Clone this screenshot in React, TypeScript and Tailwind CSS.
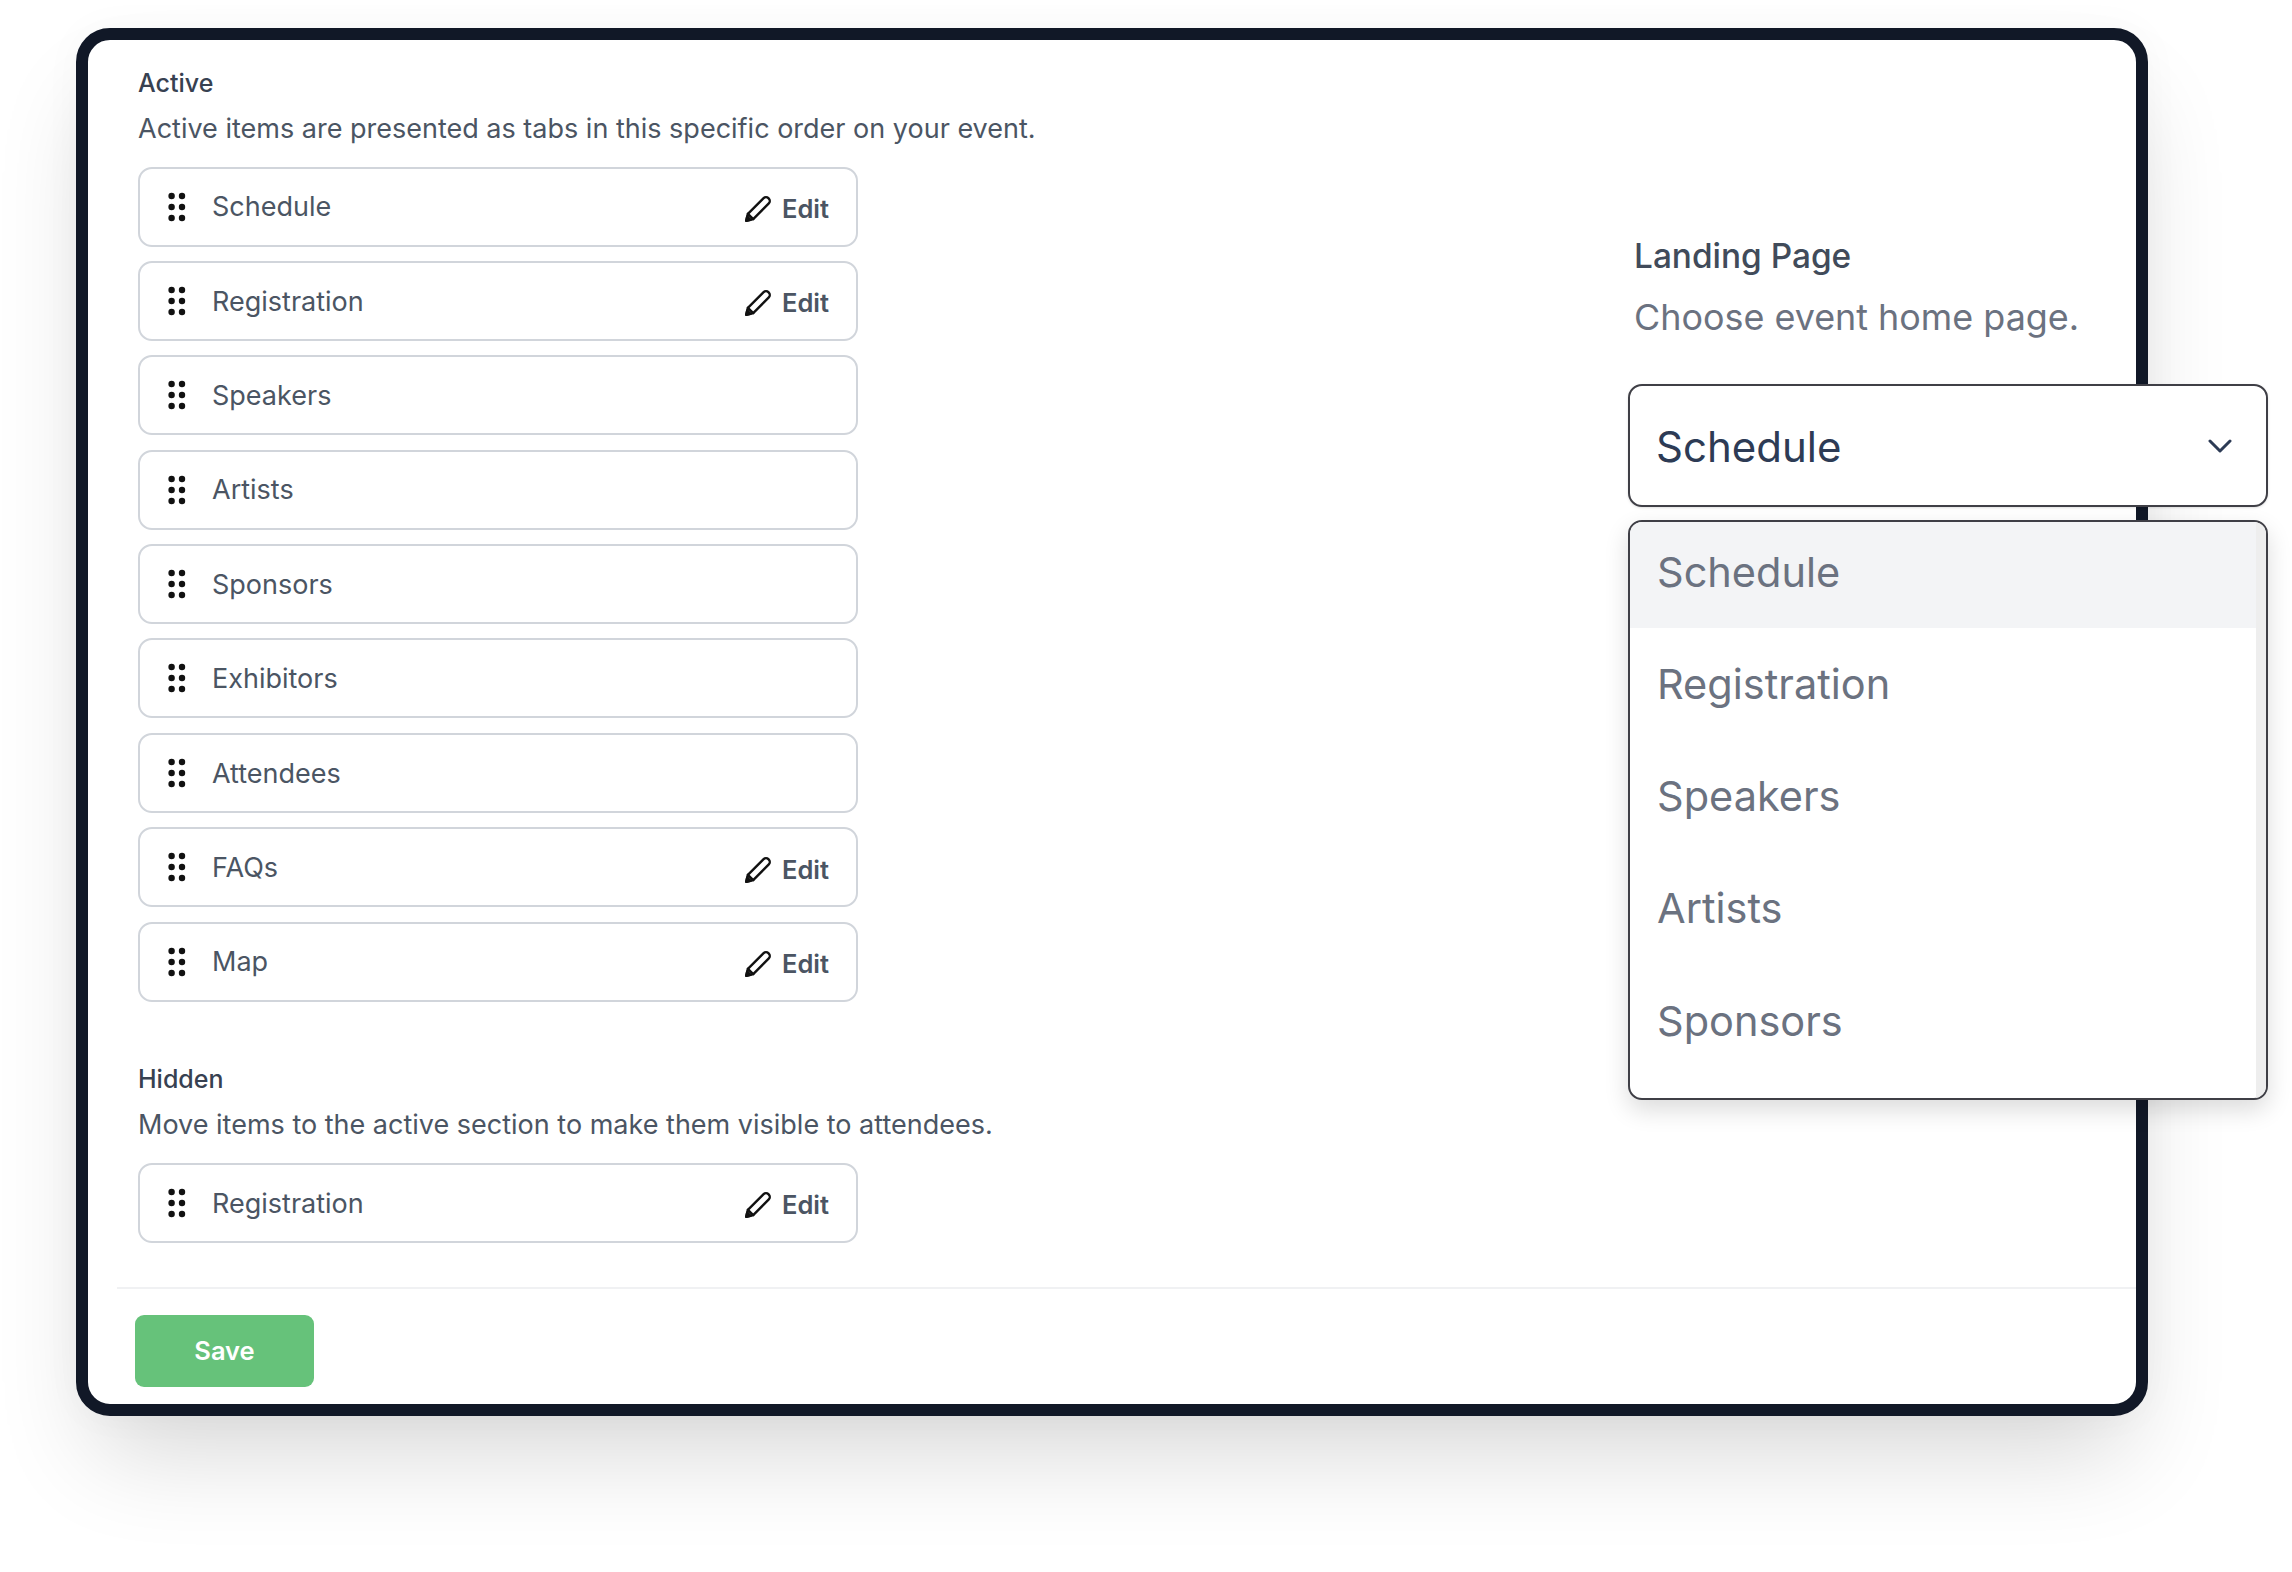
const font = { fontFamily: 'Inter, sans-serif' };

const active = [
  { name: 'Schedule', edit: true },
  { name: 'Registration', edit: true },
  { name: 'Speakers', edit: false },
  { name: 'Artists', edit: false },
  { name: 'Sponsors', edit: false },
  { name: 'Exhibitors', edit: false },
  { name: 'Attendees', edit: false },
  { name: 'FAQs', edit: true },
  { name: 'Map', edit: true },
];

const options = ['Schedule', 'Registration', 'Speakers', 'Artists', 'Sponsors'];

function Grip() {
  return (
    <svg width="18" height="30" viewBox="0 0 18 30" className="shrink-0">
      {[3, 14, 25].map((y) => (
        <g key={y} fill="#111">
          <circle cx="3.6" cy={y + 1} r="3.2" />
          <circle cx="14" cy={y + 1} r="3.2" />
        </g>
      ))}
    </svg>
  );
}

function Pencil() {
  return (
    <svg width="28" height="28" viewBox="0 0 28 28" fill="none" stroke="#111" strokeWidth="2.4" strokeLinejoin="round" strokeLinecap="round">
      <path d="M2.2 25.8l1.7-7L19.6 3.2c1.3-1.3 3.5-1.3 4.8 0l.4.4c1.3 1.3 1.3 3.5 0 4.8L9.2 24.1z" />
      <path d="M3.9 18.8l5.3 5.3" />
      <path d="M2.2 25.8l1-4.4 3.4 3.4z" fill="#111" />
    </svg>
  );
}

function Row({ name, edit }: { name: string; edit: boolean }) {
  return (
    <div className="flex h-[80px] w-[720px] items-center rounded-[14px] border-2 border-[#d1d5db] bg-white pl-[28px] pr-[27px]">
      <Grip />
      <span className="ml-[26px] pt-[2px] text-[27px] text-[#4b5563]">{name}</span>
      {edit && (
        <span className="ml-auto flex items-center gap-[10px] pt-[5px]">
          <Pencil />
          <span className="text-[25.5px] font-semibold text-[#4b5563]">Edit</span>
        </span>
      )}
    </div>
  );
}

export default function App() {
  return (
    <div style={font} className="relative h-[1572px] w-[2292px] overflow-hidden bg-white pl-[76px] pt-[28px]">
      <div className="relative flex h-[1388px] w-[2072px] flex-col rounded-[34px] border-[12px] border-[#111827] bg-white shadow-[0_55px_100px_-20px_rgba(0,0,0,0.16),0_0_40px_rgba(0,0,0,0.03)]">
        <div className="flex flex-col pl-[50px] pt-[28px]">
          <div className="text-[25px] font-medium leading-[30px] text-[#374151]">Active</div>
          <div className="mt-[16px] text-[27px] leading-[30px] text-[#4b5563]">
            Active items are presented as tabs in this specific order on your event.
          </div>
          <div className="mt-[22.5px] flex flex-col gap-[14.4px]">
            {active.map((r) => (
              <Row key={r.name} {...r} />
            ))}
          </div>
          <div className="mt-[62.8px] text-[25px] font-medium leading-[30px] text-[#374151]">Hidden</div>
          <div className="mt-[16px] text-[27px] leading-[30px] text-[#4b5563]">
            Move items to the active section to make them visible to attendees.
          </div>
          <div className="mt-[22.5px]">
            <Row name="Registration" edit />
          </div>
        </div>
        <div className="ml-[29px] mt-[44px] h-[2px] bg-[#f0f1f3]" />
        <div className="pl-[47px] pt-[26px]">
          <button className="flex h-[72px] w-[179px] items-center justify-center rounded-[9px] bg-[#66c27a] text-[25.5px] font-semibold text-white">
            Save
          </button>
        </div>

        <div className="absolute left-[1540px] top-[197.5px] w-[640px]">
          <div className="pl-[6px] text-[33.4px] font-medium leading-[36px] text-[#414b5a]">Landing Page</div>
          <div className="mt-[24px] pl-[6px] text-[35.9px] leading-[38px] text-[#6b7280]">Choose event home page.</div>
          <div className="mt-[48.5px] flex h-[123px] items-center justify-between rounded-[14px] border-2 border-[#3f3f46] bg-white pl-[26px] pr-[34px] shadow-sm">
            <span className="pt-[2px] text-[42px] text-[#2d3b55]">Schedule</span>
            <svg width="24" height="24" viewBox="0 0 24 24" fill="none" stroke="#2d3b55" strokeWidth="3" strokeLinecap="round" strokeLinejoin="round">
              <path d="M2 7l10 10 10-10" />
            </svg>
          </div>
          <div className="mt-[13px] h-[580px] overflow-hidden rounded-[14px] border-2 border-[#3f3f46] bg-white shadow-[0_10px_24px_rgba(0,0,0,0.14)]">
            <div className="flex h-full">
              <div className="flex flex-1 flex-col gap-[6.2px]">
                {options.map((o, i) => (
                  <div
                    key={o}
                    className={
                      i === 0
                        ? 'flex h-[106px] items-center bg-[#f3f4f6] pb-[6px] pl-[27px] text-[41.5px] text-[#6b7280]'
                        : 'flex h-[106px] items-center pb-[6px] pl-[27px] text-[41.5px] text-[#6b7280]'
                    }
                  >
                    {o}
                  </div>
                ))}
              </div>
              <div className="w-[10px] bg-[#eeeeee]" />
            </div>
          </div>
        </div>
      </div>
    </div>
  );
}
